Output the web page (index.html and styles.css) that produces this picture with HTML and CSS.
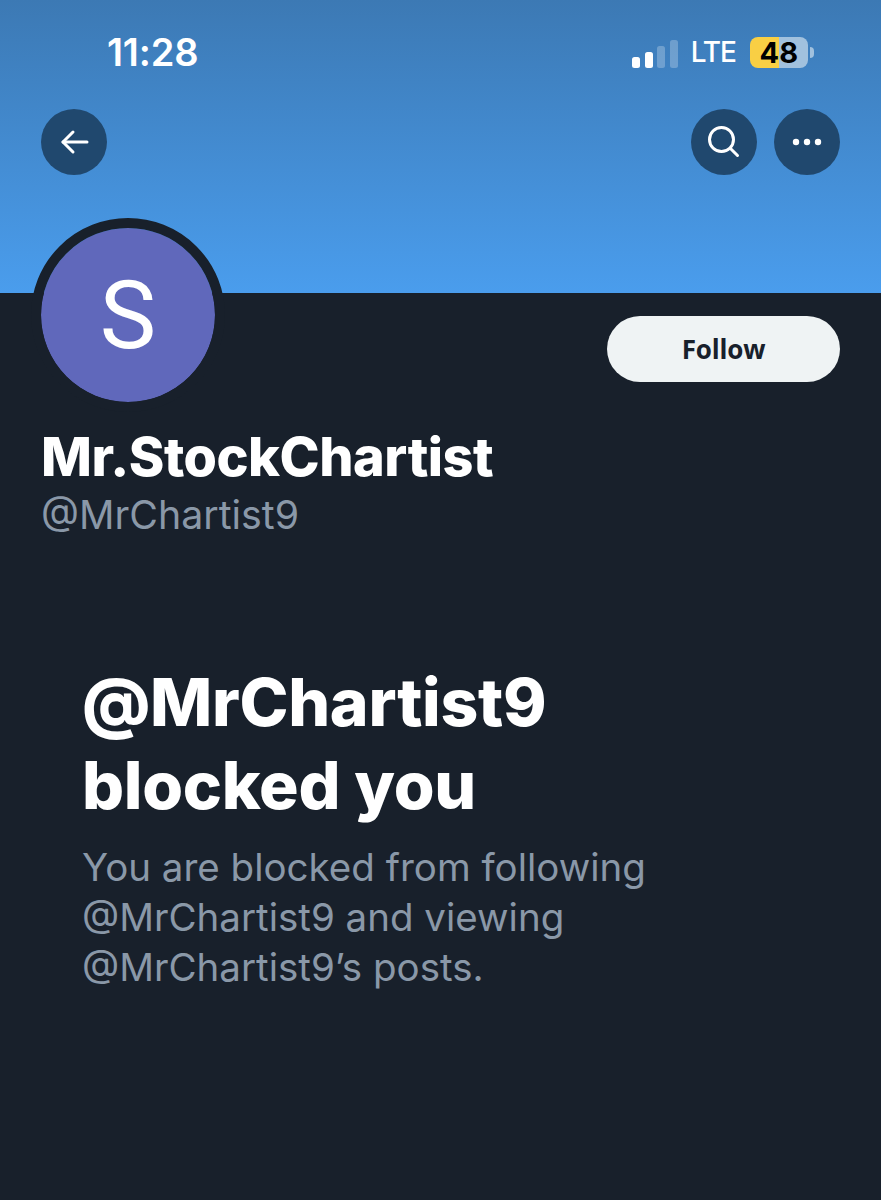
FILE: index.html
```html
<!DOCTYPE html>
<html lang="en">
<head>
  <meta charset="UTF-8" />
  <title>@MrChartist9 blocked you</title>
  <link rel="stylesheet" href="styles.css">
</head>
<body>
  <header class="banner">
    <div class="status-bar">
      <span class="clock">11:28</span>
      <div class="status-right">
        <div class="signal">
          <span class="bar bar1"></span>
          <span class="bar bar2"></span>
          <span class="bar bar3 dim"></span>
          <span class="bar bar4 dim"></span>
        </div>
        <span class="lte">LTE</span>
        <div class="battery"><span class="battery-num">48</span></div>
        <span class="battery-cap"></span>
      </div>
    </div>
    <nav class="nav-row">
      <button class="round-btn" aria-label="Back">
        <svg width="30" height="30" viewBox="0 0 30 30" fill="none" stroke="#fff" stroke-width="3" stroke-linecap="round" stroke-linejoin="round"><path d="M28 15H4"/><path d="M14 5L4 15l10 10"/></svg>
      </button>
      <div class="nav-right">
        <button class="round-btn" aria-label="Search">
          <svg width="34" height="34" viewBox="0 0 34 34" fill="none" stroke="#fff" stroke-width="3" stroke-linecap="round"><circle cx="14.5" cy="14.5" r="12"/><path d="M23.5 23.5l7 7"/></svg>
        </button>
        <button class="round-btn" aria-label="More">
          <svg width="30" height="8" viewBox="0 0 30 8" fill="#fff"><circle cx="4" cy="4" r="3.2"/><circle cx="15" cy="4" r="3.2"/><circle cx="26" cy="4" r="3.2"/></svg>
        </button>
      </div>
    </nav>
  </header>

  <main class="profile">
    <div class="profile-top">
      <div class="avatar">S</div>
      <button class="follow-btn">Follow</button>
    </div>
    <h1 class="name">Mr.StockChartist</h1>
    <p class="handle">@MrChartist9</p>

    <section class="blocked">
      <h2>@MrChartist9<br>blocked you</h2>
      <p>You are blocked from following<br>@MrChartist9 and viewing<br>@MrChartist9’s posts.</p>
    </section>
  </main>
</body>
</html>
```

FILE: styles.css
```css
* { box-sizing: border-box; }

html, body {
  margin: 0;
  padding: 0;
}

body {
  width: 881px;
  min-height: 1200px;
  background: #18202b;
  color: #fff;
  font-family: Inter, "Liberation Sans", sans-serif;
  overflow: hidden;
}

/* Top banner with status bar */
.banner {
  height: 293px;
  padding: 32px 41px 0;
  background: linear-gradient(180deg, #3c79b4 0%, #4a9ded 100%);
}

.status-bar {
  display: flex;
  justify-content: space-between;
  align-items: center;
  height: 40px;
  padding-left: 66px;
  padding-right: 26px;
}

.clock {
  font-size: 38px;
  font-weight: 600;
  letter-spacing: -0.2px;
}

.status-right {
  display: flex;
  align-items: center;
  height: 40px;
}

.signal {
  display: flex;
  align-items: flex-end;
  gap: 4.5px;
  height: 28px;
  margin-top: 4px;
  margin-right: 13px;
}

.bar {
  width: 8px;
  border-radius: 2.5px;
  background: #fff;
}

.bar1 { height: 11px; }
.bar2 { height: 16px; }
.bar3 { height: 22px; }
.bar4 { height: 28px; }

.dim { background: rgba(255, 255, 255, 0.25); }

.lte {
  font-size: 28px;
  font-weight: 500;
  letter-spacing: -1px;
  margin-right: 14px;
}

.battery {
  width: 58px;
  height: 31px;
  border-radius: 8px;
  background: linear-gradient(90deg, #f9cf44 0%, #f9cf44 50%, #a1c1de 50%, #a1c1de 100%);
  color: #000;
  display: flex;
  align-items: center;
  justify-content: center;
}

.battery-num {
  font-size: 29px;
  font-weight: 700;
  letter-spacing: 0.3px;
}

.battery-cap {
  width: 4px;
  height: 11px;
  margin-left: 2px;
  border-radius: 0 4px 4px 0;
  background: #a1c1de;
}

.nav-row {
  display: flex;
  justify-content: space-between;
  margin-top: 37px;
}

.nav-right {
  display: flex;
  gap: 17px;
}

.round-btn {
  width: 66px;
  height: 66px;
  padding: 0;
  border: none;
  border-radius: 50%;
  background: #20486e;
  display: flex;
  align-items: center;
  justify-content: center;
}

/* Profile */
.profile {
  padding: 0 41px;
}

.profile-top {
  display: flex;
  justify-content: space-between;
  align-items: flex-start;
}

.avatar {
  width: 194px;
  height: 194px;
  margin: -75px 0 0 -10px;
  border: 10px solid #18202b;
  border-radius: 50%;
  background: #6068bb;
  background-clip: padding-box;
  display: flex;
  align-items: center;
  justify-content: center;
  font-size: 95px;
  font-family: Roboto, sans-serif;
  font-weight: 400;
}

.follow-btn {
  width: 233px;
  height: 66px;
  margin-top: 23px;
  border: none;
  border-radius: 33px;
  background: #eff3f4;
  color: #18202b;
  font-family: "Open Sans", sans-serif;
  font-size: 26px;
  font-weight: 700;
  letter-spacing: -0.2px;
}

.name {
  margin: 15px 0 0;
  font-size: 54px;
  line-height: 60px;
  font-weight: 800;
  letter-spacing: -0.5px;
}

.handle {
  margin: 6px 0 0;
  font-size: 39.3px;
  line-height: 44px;
  color: #8a98a8;
}

.blocked {
  padding: 124px 0 0 41px;
}

.blocked h2 {
  margin: 0;
  font-size: 66px;
  line-height: 83px;
  font-weight: 800;
  letter-spacing: -0.3px;
}

.blocked p {
  margin: 15px 0 0;
  font-size: 38.5px;
  line-height: 50px;
  color: #8a98a8;
}
```
